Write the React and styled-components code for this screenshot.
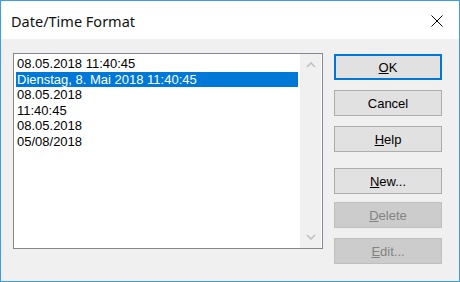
import React from "react";
import styled, { createGlobalStyle } from "styled-components";

const GlobalStyle = createGlobalStyle`
  html, body {
    margin: 0;
    padding: 0;
    background: #ffffff;
  }
`;

const items = [
  "08.05.2018 11:40:45",
  "Dienstag, 8. Mai 2018 11:40:45",
  "08.05.2018",
  "11:40:45",
  "08.05.2018",
  "05/08/2018",
];

const buttons = [
  { label: "OK", key: "O", rest: "K", top: 0, isDefault: true },
  { label: "Cancel", key: "", rest: "Cancel", top: 10 },
  { label: "Help", key: "H", rest: "elp", top: 10 },
  { label: "New...", key: "N", rest: "ew...", top: 16 },
  { label: "Delete", key: "D", rest: "elete", top: 8, disabled: true },
  { label: "Edit...", key: "E", rest: "dit...", top: 10, disabled: true },
];

const App = () => {
  return (
    <>
      <GlobalStyle />
      <Window>
        <TitleBar>
          <Title>Date/Time Format</Title>
          <CloseButton>
            <svg width="12" height="12" viewBox="0 0 12 12">
              <path d="M0.5 0.5 L11.5 11.5 M11.5 0.5 L0.5 11.5" stroke="#000" strokeWidth="1" fill="none" />
            </svg>
          </CloseButton>
        </TitleBar>
        <Body>
          <ListBox>
            <List>
              {items.map((text, i) => (
                <Item key={i} isSelected={i === 1}>
                  {text}
                </Item>
              ))}
            </List>
            <ScrollBar>
              <svg width="10" height="6" viewBox="0 0 10 6">
                <path d="M1 5 L5 1 L9 5" stroke="#c0c0c0" strokeWidth="1.6" fill="none" />
              </svg>
              <svg width="10" height="6" viewBox="0 0 10 6">
                <path d="M1 1 L5 5 L9 1" stroke="#c0c0c0" strokeWidth="1.6" fill="none" />
              </svg>
            </ScrollBar>
          </ListBox>
          <ButtonColumn>
            {buttons.map((b) => (
              <Button
                key={b.label}
                isDefault={b.isDefault}
                disabled={b.disabled}
                topGap={b.top}
              >
                {b.key && <Mnemonic>{b.key}</Mnemonic>}
                {b.rest}
              </Button>
            ))}
          </ButtonColumn>
        </Body>
      </Window>
    </>
  );
};

export default App;

const Window = styled.div`
  width: 460px;
  height: 282px;
  box-sizing: border-box;
  border: 1px solid #3d9be9;
  background: #f0f0f0;
  display: flex;
  flex-direction: column;
`;

const TitleBar = styled.div`
  height: 38px;
  background: #ffffff;
  display: flex;
  align-items: center;
  justify-content: space-between;
  padding: 0 16px 0 10px;
`;

const Title = styled.span`
  font-family: "Noto Sans", "Open Sans", sans-serif;
  font-size: 14.5px;
  color: #111111;
  margin-top: 1px;
`;

const CloseButton = styled.div`
  width: 12px;
  height: 12px;
  display: flex;
  margin-top: 1px;
`;

const Body = styled.div`
  display: flex;
  padding: 14px 0 0 12px;
  gap: 11px;
`;

const ListBox = styled.div`
  width: 310px;
  height: 196px;
  box-sizing: border-box;
  border: 1px solid #828790;
  background: #ffffff;
  display: flex;
  padding-right: 1px;
`;

const List = styled.div`
  flex: 1;
  padding: 2px 2px 0 2px;
  font-family: "Liberation Sans", Arial, sans-serif;
  font-size: 13px;
`;

const Item = styled.div`
  height: 15.6px;
  line-height: 15.6px;
  padding-left: 1px;
  white-space: nowrap;
  overflow: hidden;
  background: ${(props) => (props.isSelected ? "#0078d7" : "transparent")};
  color: ${(props) => (props.isSelected ? "#ffffff" : "#000000")};
`;

const ScrollBar = styled.div`
  width: 21px;
  background: #f0f0f0;
  display: flex;
  flex-direction: column;
  justify-content: space-between;
  align-items: center;
  padding: 8px 0 8px;
`;

const ButtonColumn = styled.div`
  display: flex;
  flex-direction: column;
  padding-top: 1px;
`;

const Button = styled.div`
  width: 108px;
  height: 26px;
  box-sizing: border-box;
  margin-top: ${(props) => props.topGap}px;
  display: flex;
  align-items: center;
  justify-content: center;
  font-family: "Liberation Sans", Arial, sans-serif;
  font-size: 13px;
  background: ${(props) => (props.disabled ? "#cccccc" : "#e1e1e1")};
  color: ${(props) => (props.disabled ? "#838383" : "#000000")};
  border: ${(props) =>
    props.isDefault
      ? "2px solid #0078d7"
      : props.disabled
      ? "1px solid #bfbfbf"
      : "1px solid #adadad"};
`;

const Mnemonic = styled.span`
  text-decoration: underline;
`;
